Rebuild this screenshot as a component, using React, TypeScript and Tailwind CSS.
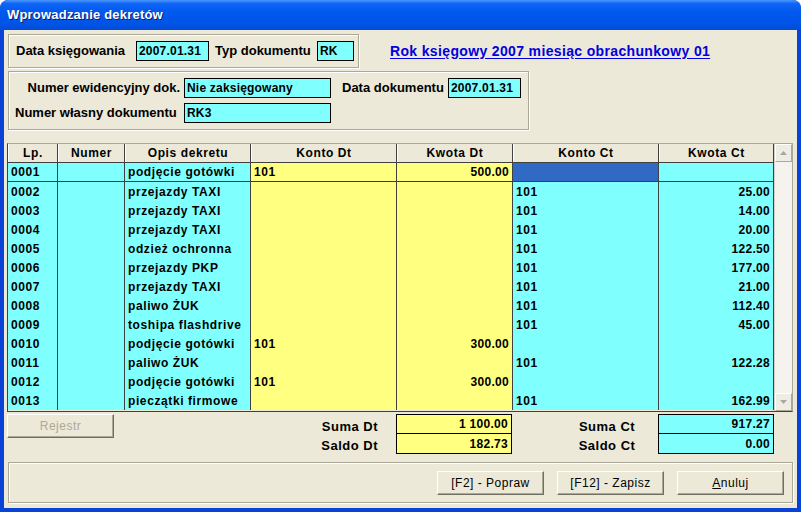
import React from "react";

type Col = { key: string; title: string; w: number; bg: string; align: "left" | "right" };

const cols: Col[] = [
  { key: "lp", title: "Lp.", w: 50, bg: "bg-[#80ffff]", align: "left" },
  { key: "nr", title: "Numer", w: 67, bg: "bg-[#80ffff]", align: "left" },
  { key: "opis", title: "Opis dekretu", w: 126, bg: "bg-[#80ffff]", align: "left" },
  { key: "kdt", title: "Konto Dt", w: 146, bg: "bg-[#ffff80]", align: "left" },
  { key: "wdt", title: "Kwota Dt", w: 116, bg: "bg-[#ffff80]", align: "right" },
  { key: "kct", title: "Konto Ct", w: 146, bg: "bg-[#80ffff]", align: "left" },
  { key: "wct", title: "Kwota Ct", w: 115, bg: "bg-[#80ffff]", align: "right" },
];

const rows: string[][] = [
  ["0001", "", "podjęcie gotówki", "101", "500.00", "", ""],
  ["0002", "", "przejazdy TAXI", "", "", "101", "25.00"],
  ["0003", "", "przejazdy TAXI", "", "", "101", "14.00"],
  ["0004", "", "przejazdy TAXI", "", "", "101", "20.00"],
  ["0005", "", "odzież ochronna", "", "", "101", "122.50"],
  ["0006", "", "przejazdy PKP", "", "", "101", "177.00"],
  ["0007", "", "przejazdy TAXI", "", "", "101", "21.00"],
  ["0008", "", "paliwo ŻUK", "", "", "101", "112.40"],
  ["0009", "", "toshipa flashdrive", "", "", "101", "45.00"],
  ["0010", "", "podjęcie gotówki", "101", "300.00", "", ""],
  ["0011", "", "paliwo ŻUK", "", "", "101", "122.28"],
  ["0012", "", "podjęcie gotówki", "101", "300.00", "", ""],
  ["0013", "", "pieczątki firmowe", "", "", "101", "162.99"],
];

function Field({ value, w }: { value: string; w: number }) {
  return (
    <div
      className="h-[20px] bg-[#80ffff] border border-black px-[2px] flex items-center text-[12px] font-bold text-black tracking-[0.2px]"
      style={{ width: w }}
    >
      {value}
    </div>
  );
}

function Btn({ children, disabled }: { children: React.ReactNode; disabled?: boolean }) {
  return (
    <div
      className={
        "w-[107px] h-[24px] flex items-center justify-center text-[12px] font-normal tracking-[0.5px] border border-t-white border-l-white border-r-[#716f64] border-b-[#716f64] bg-[#ece9d8] shadow-[inset_-1px_-1px_0_#aca899] " +
        (disabled ? "text-[#aca899]" : "text-black")
      }
    >
      {children}
    </div>
  );
}

function Triangle({ up }: { up?: boolean }) {
  return (
    <svg width="7" height="4" viewBox="0 0 7 4">
      <path d={up ? "M0 4 L3.5 0 L7 4 Z" : "M0 0 L3.5 4 L7 0 Z"} fill="#aca899" />
    </svg>
  );
}

export default function App() {
  return (
    <div className="w-[801px] h-[512px] bg-[#0842d6] rounded-t-[8px] flex flex-col overflow-hidden font-['Liberation_Sans',Arial,sans-serif] text-black">
      <div className="h-[30px] shrink-0 rounded-t-[8px] bg-[linear-gradient(to_bottom,#4a97ff_0%,#0f65f5_12%,#0058ee_40%,#0055e8_75%,#034cd8_100%)] flex items-center pl-[7px]">
        <span className="text-white font-bold text-[13px] tracking-[0.2px] [text-shadow:1px_1px_0_#0a1e6e]">
          Wprowadzanie dekretów
        </span>
      </div>

      <div className="flex-1 mx-[4px] mb-[4px] bg-[#ece9d8] flex flex-col pl-[3px] pr-[4px] text-[12px] font-bold tracking-[0.6px]">
        <div className="flex items-center mt-[4px]">
          <div className="w-[351px] h-[34px] border border-[#aca899] shadow-[inset_1px_1px_0_#fff,1px_1px_0_#fff] flex items-center pl-[7px] ml-[1px] text-[13px] tracking-[0px]">
            <span className="w-[120px]">Data księgowania</span>
            <Field value="2007.01.31" w={73} />
            <span className="ml-[6px] w-[102px]">Typ dokumentu</span>
            <Field value="RK" w={37} />
          </div>
          <span className="ml-[31px] text-[14px] text-[#0000e0] underline underline-offset-[2px] tracking-[0.35px]">
            Rok księgowy 2007 miesiąc obrachunkowy 01
          </span>
        </div>

        <div className="mt-[3px] ml-[1px] w-[521px] h-[59px] border border-[#aca899] shadow-[inset_1px_1px_0_#fff,1px_1px_0_#fff] flex flex-col justify-center gap-[5px] pl-[6px] text-[13px] tracking-[0px]">
          <div className="flex items-center">
            <span className="w-[169px] text-right pr-[4px]">Numer ewidencyjny dok.</span>
            <Field value="Nie zaksięgowany" w={147} />
            <span className="ml-[11px] w-[106px]">Data dokumentu</span>
            <Field value="2007.01.31" w={73} />
          </div>
          <div className="flex items-center">
            <span className="w-[169px]">Numer własny dokumentu</span>
            <Field value="RK3" w={147} />
          </div>
        </div>

        <div className="mt-[13px] w-[786px] h-[269px] border border-t-[#aca899] border-l-[#404040] border-b-[#404040] border-r-[#aca899] flex">
          <div className="flex flex-col w-[766px]">
            <div className="flex h-[19px] border-b border-[#404040]">
              {cols.map((c) => (
                <div
                  key={c.key}
                  className="h-full bg-[#ece9d8] border-l border-l-white border-r border-r-[#404040] flex items-center justify-center"
                  style={{ width: c.w }}
                >
                  {c.title}
                </div>
              ))}
            </div>
            {rows.map((r, i) => (
              <div key={i} className="flex h-[19px]">
                {cols.map((c, j) => {
                  const selected = i === 0 && c.key === "kct";
                  return (
                    <div
                      key={c.key}
                      className={
                        "h-full flex items-center px-[3px] border-r border-r-[#404040] " +
                        (selected ? "bg-[#316ac5] " : c.bg + " ") +
                        (c.align === "right" ? "justify-end tracking-[0.3px] " : "") +
                        (i === 0 ? "border-b border-b-[#1a3c9c]" : "")
                      }
                      style={{ width: c.w }}
                    >
                      {r[j]}
                    </div>
                  );
                })}
              </div>
            ))}
          </div>
          <div className="w-[18px] flex flex-col bg-[#f4f3ee] border-l border-[#d4d0c8]">
            <div className="h-[18px] bg-[#eeede5] border border-t-white border-l-white border-r-[#aca899] border-b-[#aca899] flex items-center justify-center">
              <Triangle up />
            </div>
            <div className="flex-1" />
            <div className="h-[18px] bg-[#eeede5] border border-t-white border-l-white border-r-[#aca899] border-b-[#aca899] flex items-center justify-center">
              <Triangle />
            </div>
          </div>
        </div>

        <div className="flex h-[42px] mt-[2px]">
          <div className="w-[389px] flex items-start justify-between">
            <Btn disabled>Rejestr</Btn>
            <div className="flex flex-col items-end pr-[18px] pt-[3px] gap-[2px] text-[13px] tracking-[0.5px]">
              <span className="h-[17px]">Suma Dt</span>
              <span className="h-[17px]">Saldo Dt</span>
            </div>
          </div>
          <div className="flex flex-col w-[116px] tracking-[0.3px]">
            <div className="h-[20px] bg-[#ffff80] border border-black flex items-center justify-end pr-[3px]">1 100.00</div>
            <div className="h-[20px] bg-[#ffff80] border border-black border-t-0 flex items-center justify-end pr-[3px]">182.73</div>
          </div>
          <div className="w-[146px] flex flex-col items-center pl-[44px] pt-[3px] gap-[2px] text-[13px] tracking-[0.5px]">
            <span className="h-[17px]">Suma Ct</span>
            <span className="h-[17px]">Saldo Ct</span>
          </div>
          <div className="flex flex-col w-[116px] tracking-[0.3px]">
            <div className="h-[20px] bg-[#80ffff] border border-black flex items-center justify-end pr-[3px]">917.27</div>
            <div className="h-[20px] bg-[#80ffff] border border-black border-t-0 flex items-center justify-end pr-[3px]">0.00</div>
          </div>
        </div>

        <div className="mt-[6px] ml-[1px] w-[785px] h-[41px] border border-[#aca899] shadow-[inset_1px_1px_0_#fff,1px_1px_0_#fff] flex items-center justify-end gap-[13px] pr-[8px]">
          <Btn>[F2] - Popraw</Btn>
          <Btn>[F12] - Zapisz</Btn>
          <Btn>
            <span>
              <span className="underline">A</span>nuluj
            </span>
          </Btn>
        </div>
      </div>
    </div>
  );
}
